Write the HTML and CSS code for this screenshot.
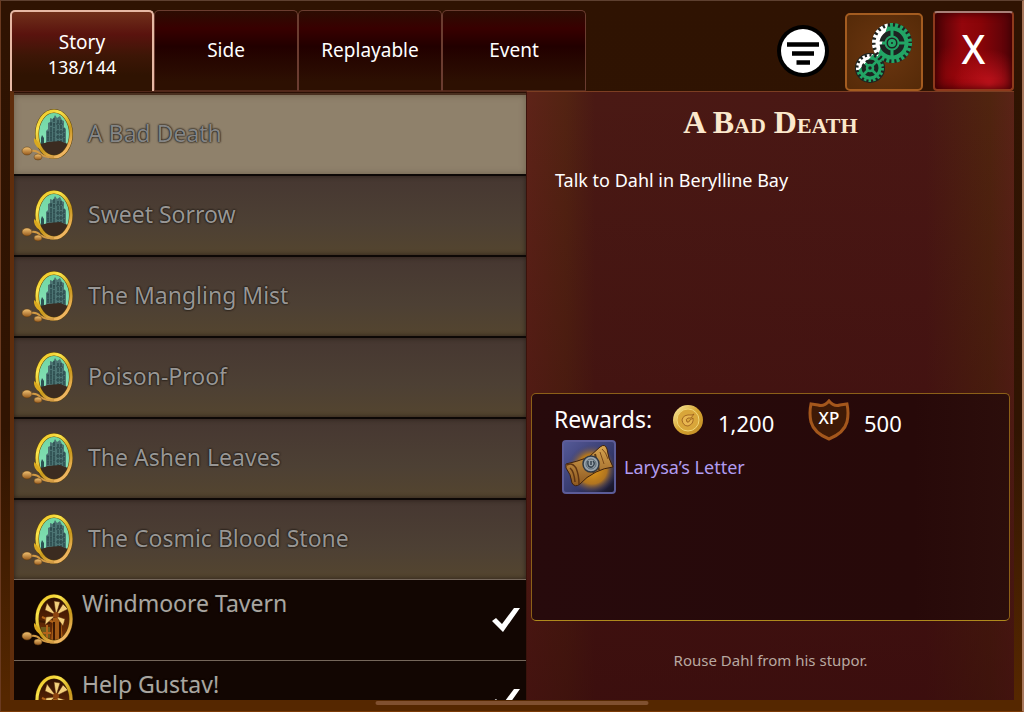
FILE: index.html
```html
<!DOCTYPE html>
<html lang="en">
<head>
    <meta charset="UTF-8">
    <meta name="viewport" content="width=device-width, initial-scale=1.0">
    <title>Quests</title>
    <link rel="stylesheet" href="styles.css">
</head>
<body>
    <!-- Shared icon shapes -->
    <svg class="sprite" aria-hidden="true">
        <defs>
            <linearGradient id="gold" x1="0" y1="0" x2="0.6" y2="1">
                <stop offset="0" stop-color="#e8b818"/>
                <stop offset="0.3" stop-color="#fbe54a"/>
                <stop offset="0.7" stop-color="#c8981c"/>
                <stop offset="1" stop-color="#efb560"/>
            </linearGradient>
            <linearGradient id="leaf" x1="0" y1="0" x2="0" y2="1">
                <stop offset="0" stop-color="#f4c474"/>
                <stop offset="1" stop-color="#94581c"/>
            </linearGradient>
            <linearGradient id="wood" x1="0" y1="0" x2="0" y2="1">
                <stop offset="0" stop-color="#2c0d02"/>
                <stop offset="1" stop-color="#7a3608"/>
            </linearGradient>
            <linearGradient id="sky" x1="0" y1="0" x2="0" y2="1">
                <stop offset="0" stop-color="#6fd6a2"/>
                <stop offset="1" stop-color="#8fe6c0"/>
            </linearGradient>
            <clipPath id="oval"><ellipse cx="34" cy="27" rx="16" ry="22"/></clipPath>

            <g id="branch">
                <path d="M11 44 Q17 43 20 47 Q26 51 34 50" fill="none" stroke="#d29a44" stroke-width="2"/>
                <ellipse cx="7" cy="44" rx="5" ry="4" fill="url(#leaf)" stroke="#5c3a10" stroke-width="0.500"/>
                <ellipse cx="18" cy="50" rx="4" ry="3" fill="url(#leaf)" stroke="#5c3a10" stroke-width="0.500"/>
                <path d="M14 31 Q20 35 20 42 Q13 38 14 31Z" fill="#dba91e"/>
            </g>

            <symbol id="castle" viewBox="0 0 56 56">
                <ellipse cx="34" cy="27" rx="17" ry="23" fill="url(#sky)"/>
                <g clip-path="url(#oval)">
                    <path d="M26 38 V24 L28 22 V16 L30 15 V11 L33 12 L35 8 L37 11 L40 9 L42 13 L44 14 V20 L46 22 V38Z" fill="#4c7473"/>
                    <path d="M28 25 V37 M31 15 V36 M34 11 V36 M38 13 V36 M41 13 V35 M44 21 V36" stroke="#1c383c" stroke-dasharray="4 1"/>
                    <path d="M30 17 H43 M27 25 H45 M27 30 H45" stroke="#2a474b" stroke-dasharray="2 1"/>
                    <path d="M21 38 V31 L22 28 L24 31 V38Z" fill="#2c5053"/>
                    <path d="M14 42 L21 37 L28 35 L40 34 L48 37 L52 42 V52 H14Z" fill="#3b2b20"/>
                </g>
                <ellipse cx="34" cy="27" rx="17" ry="23" fill="none" stroke="#5c430c" stroke-width="4"/>
                <ellipse cx="34" cy="27" rx="17" ry="23" fill="none" stroke="url(#gold)" stroke-width="3"/>
                <use href="#branch"/>
            </symbol>

            <symbol id="windmill" viewBox="0 0 56 56">
                <ellipse cx="34" cy="27" rx="17" ry="23" fill="url(#wood)"/>
                <g clip-path="url(#oval)">
                    <path d="M31 50 L33 26 H41 L43 50Z" fill="#a35a16"/>
                    <path d="M34 50 V30 M40 50 V30 M25 50 V36 M19 29 L30 31" stroke="#3c1803" stroke-width="2" fill="none"/>
                    <path d="M21 35 H30 V46 H22Z" fill="#6d5a1c"/>
                    <path d="M22 25 L33 30 M27 33 V49 M20 41 H31" stroke="#b3641a" stroke-width="2"/>
                    <path d="M36 23 L34 9 L40 10Z M36 23 L27 11 L25 18Z M36 23 L43 12 L48 17Z M36 24 L45 27 L43 34Z M35 24 L26 25 L25 33Z" fill="#f3cf7c" stroke="#54290a" stroke-width="0.500"/>
                    <circle cx="36" cy="23" r="3" fill="#8c4410"/>
                </g>
                <ellipse cx="34" cy="27" rx="17" ry="23" fill="none" stroke="#4e390a" stroke-width="4"/>
                <ellipse cx="34" cy="27" rx="17" ry="23" fill="none" stroke="url(#gold)" stroke-width="3"/>
                <use href="#branch"/>
            </symbol>

            <symbol id="check" viewBox="0 0 28 24">
                <path d="M0 13 L4 10 L10 16 L22 0 H28 L11 24Z" fill="#fff"/>
            </symbol>
        </defs>
    </svg>

    <div class="window">
        <header class="topbar">
            <div class="tabs" role="tablist">
                <button class="tab active" role="tab" aria-selected="true">Story<span class="count">138/144</span></button>
                <button class="tab" role="tab" aria-selected="false">Side</button>
                <button class="tab" role="tab" aria-selected="false">Replayable</button>
                <button class="tab" role="tab" aria-selected="false">Event</button>
            </div>
            <div class="actions">
                <button class="filter-button" aria-label="Filter">
                    <svg width="52" height="52" viewBox="0 0 52 52">
                        <circle cx="26" cy="26" r="26" fill="#000"/>
                        <circle cx="26" cy="26" r="22" fill="#fff"/>
                        <path d="M10 19.500H42 M15 28.500H37 M19.500 37.500H33" stroke="#000" stroke-width="4.500"/>
                    </svg>
                </button>
                <button class="settings-button" aria-label="Settings">
                    <svg width="60" height="64" viewBox="0 0 60 64">
                        <defs>
                            <linearGradient id="big-gear" gradientUnits="userSpaceOnUse" x1="20" y1="18" x2="58" y2="30">
                                <stop offset="0.22" stop-color="#fff"/>
                                <stop offset="0.24" stop-color="#22a565"/>
                            </linearGradient>
                            <linearGradient id="small-gear" gradientUnits="userSpaceOnUse" x1="4" y1="36" x2="28" y2="58">
                                <stop offset="0.3" stop-color="#fff"/>
                                <stop offset="0.32" stop-color="#22a565"/>
                            </linearGradient>
                        </defs>
                        <circle cx="38" cy="23" r="20" fill="#1d2321"/>
                        <circle cx="16" cy="48" r="15" fill="#1d2321"/>
                        <g fill="none" stroke="url(#big-gear)">
                            <circle cx="38" cy="23" r="18" stroke-width="4" stroke-dasharray="3 2.140"/>
                            <circle cx="38" cy="23" r="14.500" stroke-width="4"/>
                            <circle cx="38" cy="23" r="6.500" stroke-width="2"/>
                            <path d="M38 9 V17 M38 29 V37 M24 23 H32 M44 23 H52" stroke-width="3"/>
                            <circle cx="38" cy="23" r="2.500" stroke-width="3"/>
                        </g>
                        <g fill="none" stroke="url(#small-gear)">
                            <circle cx="16" cy="48" r="12.500" stroke-width="3" stroke-dasharray="2.500 2.120"/>
                            <circle cx="16" cy="48" r="10" stroke-width="3"/>
                            <circle cx="16" cy="48" r="3" stroke-width="2.500"/>
                            <path d="M9 41 L14 46 M18 50 L23 55 M23 41 L18 46 M14 50 L9 55" stroke-width="2.500"/>
                        </g>
                    </svg>
                </button>
                <button class="close-button" aria-label="Close">X</button>
            </div>
        </header>

        <main class="content">
            <ul class="quests">
                <li><button class="quest selected"><svg class="badge"><use href="#castle"/></svg><span>A Bad Death</span></button></li>
                <li><button class="quest"><svg class="badge"><use href="#castle"/></svg><span>Sweet Sorrow</span></button></li>
                <li><button class="quest"><svg class="badge"><use href="#castle"/></svg><span>The Mangling Mist</span></button></li>
                <li><button class="quest"><svg class="badge"><use href="#castle"/></svg><span>Poison-Proof</span></button></li>
                <li><button class="quest"><svg class="badge"><use href="#castle"/></svg><span>The Ashen Leaves</span></button></li>
                <li><button class="quest"><svg class="badge"><use href="#castle"/></svg><span>The Cosmic Blood Stone</span></button></li>
                <li><button class="quest done"><svg class="badge"><use href="#windmill"/></svg><span>Windmoore Tavern</span><svg class="check"><use href="#check"/></svg></button></li>
                <li><button class="quest done"><svg class="badge"><use href="#windmill"/></svg><span>Help Gustav!</span><svg class="check"><use href="#check"/></svg></button></li>
            </ul>

            <section class="details">
                <h1>A Bad Death</h1>
                <p class="objective">Talk to Dahl in Berylline Bay</p>

                <div class="rewards">
                    <div class="reward-row">
                        <h2>Rewards:</h2>
                        <svg class="coin" viewBox="0 0 32 32">
                            <defs>
                                <linearGradient id="coin-face" x1="0" y1="0" x2="1" y2="1">
                                    <stop offset="0" stop-color="#fdf0a8"/>
                                    <stop offset="0.5" stop-color="#d6a430"/>
                                    <stop offset="1" stop-color="#c08a26"/>
                                </linearGradient>
                            </defs>
                            <circle cx="16" cy="16" r="15" fill="url(#coin-face)"/>
                            <circle cx="16" cy="16" r="11" fill="#d9a63a" stroke="#f2d878"/>
                            <path d="M20 11 Q11 10 10 16 Q11 22 16 22 Q22 20 21 14 L18 16 Q17 19 15 18 Q13 15 16 14 L19 14 L22 10Z" fill="#e8b650" stroke="#94581a" stroke-width="0.800"/>
                        </svg>
                        <span class="amount gold">1,200</span>
                        <svg class="shield" viewBox="0 0 42 42">
                            <path d="M21 2 Q26 8 32 6 L39 5 Q41 14 39 23 Q36 34 21 40 Q6 34 3 23 Q1 14 3 5 L10 6 Q16 8 21 2Z" fill="#3f1a06" stroke="#a4571c" stroke-width="3"/>
                            <text x="21" y="25" text-anchor="middle" class="xp-label">XP</text>
                        </svg>
                        <span class="amount">500</span>
                    </div>
                    <a class="item" href="#">
                        <svg class="item-icon" viewBox="0 0 54 54">
                            <defs>
                                <radialGradient id="item-glow">
                                    <stop offset="0" stop-color="#e39a16"/>
                                    <stop offset="0.6" stop-color="#b07420"/>
                                    <stop offset="1" stop-color="#3b3f74" stop-opacity="0"/>
                                </radialGradient>
                                <linearGradient id="item-back" x1="0" y1="0" x2="1" y2="1">
                                    <stop offset="0" stop-color="#555a98"/>
                                    <stop offset="0.6" stop-color="#34386a"/>
                                    <stop offset="1" stop-color="#14101c"/>
                                </linearGradient>
                                <linearGradient id="paper" x1="0" y1="0" x2="0" y2="1">
                                    <stop offset="0" stop-color="#d8a550"/>
                                    <stop offset="1" stop-color="#8d5820"/>
                                </linearGradient>
                            </defs>
                            <rect x="1" y="1" width="52" height="52" rx="3" fill="url(#item-back)"/>
                            <circle cx="30" cy="29" r="25" fill="url(#item-glow)"/>
                            <path d="M4 24 Q14 22 27 17 L38 7 Q43 3 45 9 Q46 18 51 27 Q42 28 34 32 Q24 37 18 44 Q13 48 10 43 Q9 34 4 28Z" fill="url(#paper)" stroke="#3e210c"/>
                            <path d="M5 25 Q10 22 14 28 Q17 35 17 44 M8 28 Q12 31 13 42" fill="none" stroke="#603512" stroke-width="1.500"/>
                            <path d="M40 9 Q44 12 46 19 M38 12 L42 24" fill="none" stroke="#7c4a1a"/>
                            <path d="M22 19 L32 33 M33 14 L37 30" stroke="#5d3914" stroke-width="2"/>
                            <circle cx="29" cy="24" r="8" fill="#98a3ab" stroke="#303944" stroke-width="1.500"/>
                            <circle cx="29" cy="24" r="5" fill="none" stroke="#5a6873"/>
                            <path d="M26 21 Q25 28 30 27 Q34 24 31 21 M29 21 V25" fill="none" stroke="#35424e" stroke-width="1.500"/>
                            <rect x="1" y="1" width="52" height="52" rx="3" fill="none" stroke="#5c5c98" stroke-width="2"/>
                        </svg>
                        <span>Larysa’s Letter</span>
                    </a>
                </div>

                <p class="hint">Rouse Dahl from his stupor.</p>
            </section>
        </main>
        <div class="home-bar"></div>
    </div>
</body>
</html>
```

FILE: styles.css
```css
* {
    box-sizing: border-box;
}

body {
    margin: 0;
    font-family: 'Noto Sans', 'Open Sans', sans-serif;
    color: #fff;
    background: #2f1302;
}

h1, h2, p, ul {
    margin: 0;
    padding: 0;
    font-weight: 400;
}

button {
    padding: 0;
    border: 0;
    font: inherit;
    color: inherit;
    background: none;
    cursor: pointer;
}

svg {
    display: block;
    flex: none;
}

.sprite {
    position: absolute;
    width: 0;
    height: 0;
}

.window {
    position: relative;
    display: flex;
    flex-direction: column;
    height: 100vh;
    padding: 9px 8px 11px 9px;
    border: 1px solid #6a3a20;
    border-top-color: #5e4030;
    border-right: 2px solid #a8785c;
    border-bottom-color: #7c3a06;
    background: linear-gradient(#2f1302 0, #301402 60%, #552700 98%);
}

/* Top bar */
.topbar {
    display: flex;
    justify-content: space-between;
    height: 81px;
}

.tabs {
    display: flex;
}

.tab {
    width: 144px;
    border: 1px solid #6b3c30;
    border-bottom-color: #52281a;
    border-radius: 5px 5px 0 0;
    font-size: 19px;
    line-height: 25px;
    background: linear-gradient(#2c0c02 0, #380000 22%, #220000 45%, #2d1002 90%);
}

.tab.active {
    padding-top: 6px;
    border: 2px solid #e6b8a4;
    border-bottom: 0;
    background: linear-gradient(#70301a 0, #5a130e 28%, #3d1606 55%, #2f1302 80%);
}

.count {
    display: block;
    font-size: 18px;
}

.actions {
    display: flex;
    align-items: flex-end;
}

.filter-button {
    align-self: center;
    margin-right: 16px;
}

.settings-button {
    display: grid;
    place-items: center;
    width: 78px;
    height: 78px;
    margin-right: 10px;
    border: 2px solid #a45c20;
    border-radius: 5px;
    background: radial-gradient(#6b3610, #552a08);
}

.close-button {
    width: 81px;
    height: 80px;
    border: 2px solid #8e3a1c;
    border-top-color: #a88078;
    border-radius: 4px;
    font-size: 39px;
    font-weight: 500;
    line-height: 72px;
    padding-bottom: 4px;
    background:
        radial-gradient(circle at 70% 95%, rgba(200, 20, 30, 0.9), transparent 40%),
        radial-gradient(circle at 25% 80%, rgba(150, 5, 10, 0.8), transparent 35%),
        linear-gradient(90deg, #4a0205, #94060c 35%, #880408 60%, #520308);
    box-shadow: inset 0 0 8px #380002;
}

/* Quest list */
.content {
    display: grid;
    grid-template-columns: 516fr 488fr;
    flex: 1;
    min-height: 0;
}

.quests {
    overflow: hidden;
    padding-top: 1px;
    border-top: 1px solid #52281a;
    border-left: 4px solid #5f2d0c;
    list-style: none;
    background: #2a1005;
}

.quest {
    display: flex;
    align-items: center;
    gap: 12px;
    width: 100%;
    height: 81px;
    padding: 0 6px;
    border-top: 2px solid #0d0806;
    font-size: 23px;
    line-height: 30px;
    text-align: left;
    color: #989694;
    background: linear-gradient(#463731, #4d4034 60%, #54452f);
    box-shadow: inset 0 0 5px #2a1f18;
    text-shadow: 0 0 2px #15120f, 0 0 2px #15120f;
}

.quest span {
    padding-bottom: 4px;
}

.quest.selected {
    border-top-color: #4a3020;
    color: #858585;
    background: #8f816b;
    box-shadow: inset 0 0 6px #6d604d;
}

.quest.done {
    gap: 6px;
    border-top: 1px solid #75675b;
    color: #aaa6a0;
    background: #120602;
    box-shadow: none;
}

.quest.done span {
    flex: 1;
    padding-bottom: 34px;
}

.badge {
    width: 56px;
    height: 56px;
}

.check {
    width: 28px;
    height: 24px;
}

/* Quest details */
.details {
    display: flex;
    flex-direction: column;
    padding: 0 4px;
    border-top: 1px solid #7c3e22;
    border-left: 1px solid #3a120b;
    background:
        linear-gradient(transparent, rgba(50, 8, 10, 0.6)),
        linear-gradient(90deg, #5e2318, #532312 8%, #4a1914 14%, #4a1714 82%, #50240f 95%, #5a2317);
}

.details h1 {
    padding-top: 12px;
    font-family: 'Liberation Serif', serif;
    font-size: 32px;
    font-variant: small-caps;
    font-weight: 700;
    line-height: 36px;
    text-align: center;
    color: #fbe8cc;
}

.objective {
    flex: 1;
    padding: 28px 24px 0;
    font-size: 18px;
    line-height: 24px;
}

.rewards {
    height: 228px;
    padding: 6px 22px;
    border: 1px solid #8c6018;
    border-bottom-color: #b08a1c;
    border-radius: 5px;
    background: linear-gradient(90deg, #270a0c, #270909 80%, #2c0e0b);
}

.reward-row {
    display: flex;
    align-items: center;
    height: 40px;
    font-size: 22px;
    line-height: 30px;
}

.reward-row h2 {
    width: 118px;
    padding-bottom: 2px;
    font-size: 23px;
}

.coin {
    width: 32px;
    height: 32px;
}

.amount {
    padding-top: 6px;
    margin-left: 14px;
}

.amount.gold {
    width: 90px;
}

.shield {
    width: 42px;
    height: 42px;
}

.xp-label {
    font-size: 17px;
    font-weight: 500;
    fill: #fff;
}

.item {
    display: inline-flex;
    align-items: center;
    gap: 8px;
    padding: 0 8px;
    font-size: 18px;
    line-height: 24px;
    color: #b19cf0;
    text-decoration: none;
}

.item-icon {
    width: 54px;
    height: 54px;
}

.hint {
    height: 79px;
    padding-top: 28px;
    font-size: 15px;
    line-height: 22px;
    text-align: center;
    color: #b8a8a0;
}

.home-bar {
    position: absolute;
    bottom: 6px;
    left: 50%;
    width: 273px;
    height: 4px;
    border-radius: 2px;
    background: #80502f;
    transform: translateX(-50%);
}
```
